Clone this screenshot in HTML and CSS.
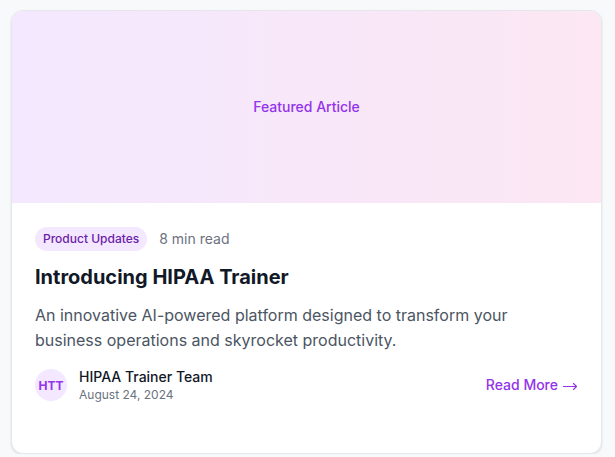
FILE: index.html
```html
<!DOCTYPE html>
<html lang="en">
<head>
<meta charset="utf-8">
<title>Featured Article</title>
<link rel="stylesheet" href="styles.css">
</head>
<body>
<article class="card">
  <div class="hero"><span class="hero-label">Featured Article</span></div>
  <div class="content">
    <div class="meta">
      <span class="tag">Product Updates</span>
      <span class="read-time">8 min read</span>
    </div>
    <h2 class="title">Introducing HIPAA Trainer</h2>
    <p class="desc">An innovative AI-powered platform designed to transform your business operations and skyrocket productivity.</p>
    <div class="footer">
      <div class="author">
        <div class="avatar">HTT</div>
        <div class="author-info">
          <div class="author-name">HIPAA Trainer Team</div>
          <div class="date">August 24, 2024</div>
        </div>
      </div>
      <a class="read-more" href="#">Read More<svg class="arrow" width="15" height="8" viewBox="0 0 15 8" aria-hidden="true"><path d="M0 4.5H13.5M10.5 1.5L13.5 4.5L10.5 7.5" fill="none" stroke="currentColor" stroke-width="1.1" stroke-linecap="round" stroke-linejoin="round"/></svg></a>
    </div>
  </div>
</article>
</body>
</html>
```
FILE: styles.css
```css
* { box-sizing: border-box; }
html, body { margin: 0; }
body {
  background: #f8f9fb;
  font-family: Inter, "Noto Sans", sans-serif;
  padding: 10px 13px 0 11px;
  -webkit-font-smoothing: antialiased;
}
.card {
  background: #fff;
  border: 1px solid #e5e7eb;
  border-radius: 12px;
  overflow: hidden;
  height: 444px;
  box-shadow: 0 1px 3px rgba(0,0,0,0.08), 0 1px 2px rgba(0,0,0,0.04);
}
.hero {
  height: 192px;
  background: linear-gradient(to right, #f3e8ff, #fce7f3);
  display: flex;
  align-items: center;
  justify-content: center;
}
.hero-label {
  color: #9333ea;
  font-size: 14px;
  font-weight: 500;
  margin-bottom: 2px;
}
.content { padding: 24px 23px; }
.meta {
  display: flex;
  align-items: center;
  gap: 12px;
  margin-bottom: 12px;
}
.tag {
  background: #f3e8ff;
  color: #6b21a8;
  font-size: 12px;
  font-weight: 500;
  line-height: 16px;
  padding: 4px 8px;
  border-radius: 9999px;
}
.read-time {
  color: #6b7280;
  font-size: 14px;
  line-height: 20px;
}
.title {
  margin: 0 0 12px;
  font-size: 20px;
  line-height: 28px;
  font-weight: 700;
  color: #111827;
}
.desc {
  margin: 0 0 14px;
  font-size: 16px;
  line-height: 25px;
  color: #4b5563;
}
.footer {
  display: flex;
  align-items: center;
  justify-content: space-between;
}
.author {
  display: flex;
  align-items: center;
  gap: 12px;
}
.avatar {
  width: 32px;
  height: 32px;
  border-radius: 50%;
  background: #f3e8ff;
  color: #9333ea;
  font-size: 12px;
  font-weight: 700;
  display: flex;
  align-items: center;
  justify-content: center;
}
.author-name {
  font-size: 14px;
  line-height: 20px;
  font-weight: 500;
  color: #111827;
}
.date {
  font-size: 12px;
  line-height: 16px;
  color: #6b7280;
}
.read-more {
  display: flex;
  align-items: center;
  gap: 5px;
  color: #9333ea;
  font-size: 14px;
  line-height: 20px;
  font-weight: 500;
  text-decoration: none;
  margin-bottom: 1px;
}
.arrow {
  display: block;
  margin-top: 2px;
}
```
